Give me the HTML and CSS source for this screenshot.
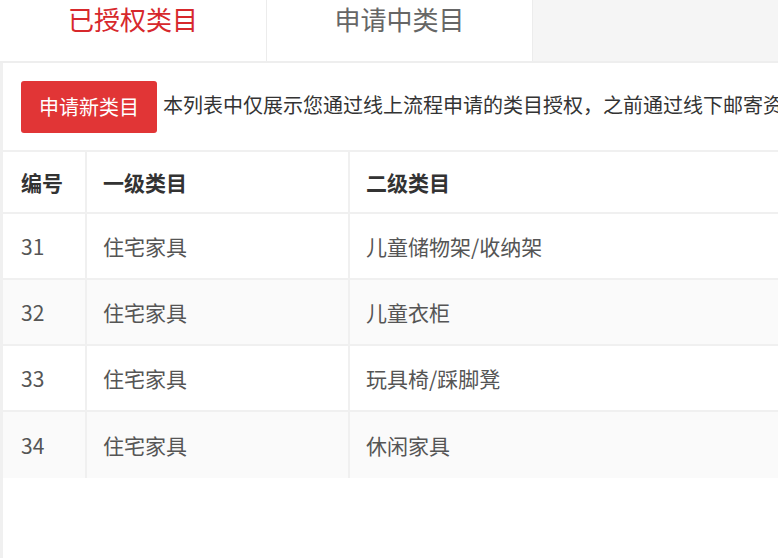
FILE: index.html
```html
<!DOCTYPE html>
<html lang="zh-CN">
<head>
<meta charset="utf-8">
<title>类目授权</title>
<link rel="stylesheet" href="styles.css">
</head>
<body>
<div class="page">
  <div class="tabs">
    <div class="tab tab-active">已授权类目</div>
    <div class="tab">申请中类目</div>
  </div>
  <div class="panel">
    <div class="toolbar">
      <button class="btn-apply">申请新类目</button>
      <span class="notice">本列表中仅展示您通过线上流程申请的类目授权，之前通过线下邮寄资料</span>
    </div>
    <div class="table">
      <div class="row row-head">
        <div class="cell c1">编号</div>
        <div class="cell c2">一级类目</div>
        <div class="cell c3">二级类目</div>
      </div>
      <div class="row">
        <div class="cell c1">31</div>
        <div class="cell c2">住宅家具</div>
        <div class="cell c3">儿童储物架/收纳架</div>
      </div>
      <div class="row row-alt">
        <div class="cell c1">32</div>
        <div class="cell c2">住宅家具</div>
        <div class="cell c3">儿童衣柜</div>
      </div>
      <div class="row">
        <div class="cell c1">33</div>
        <div class="cell c2">住宅家具</div>
        <div class="cell c3">玩具椅/踩脚凳</div>
      </div>
      <div class="row row-alt">
        <div class="cell c1">34</div>
        <div class="cell c2">住宅家具</div>
        <div class="cell c3">休闲家具</div>
      </div>
    </div>
  </div>
</div>
</body>
</html>
```
FILE: styles.css
```css
html, body {
  margin: 0;
  padding: 0;
  height: 100%;
  overflow: hidden;
  background: #ffffff;
  font-family: "Noto Sans CJK SC", "Noto Sans", sans-serif;
}

.page {
  display: flex;
  flex-direction: column;
  height: 558px;
  width: 778px;
  overflow: hidden;
}

.tabs {
  display: flex;
  height: 61px;
  background: #f5f5f5;
  border-bottom: 2px solid #eeeeee;
  flex-shrink: 0;
}

.tab {
  width: 265px;
  height: 61px;
  background: #ffffff;
  border-right: 1px solid #ececec;
  text-align: center;
  font-size: 26px;
  line-height: 38px;
  color: #666666;
}

.tab-active {
  width: 266px;
  color: #d7282c;
}

.panel {
  flex: 1;
  background: #ffffff;
  border-left: 3px solid #f0f0f0;
  overflow: hidden;
}

.toolbar {
  display: flex;
  align-items: center;
  padding: 18px 0 17px 18px;
  border-bottom: 2px solid #f0f0f0;
  white-space: nowrap;
  overflow: hidden;
}

.btn-apply {
  flex-shrink: 0;
  width: 136px;
  height: 52px;
  padding: 0;
  border: none;
  border-radius: 3px;
  background: #e13536;
  color: #ffffff;
  font-family: inherit;
  font-size: 20px;
  line-height: 52px;
}

.notice {
  margin-left: 6px;
  margin-bottom: 6px;
  font-size: 20px;
  color: #333333;
}

.table {
  width: 1100px;
}

.row {
  display: grid;
  grid-template-columns: 84px 263px 1fr;
  height: 66px;
  box-sizing: border-box;
  border-bottom: 2px solid #f0f0f0;
  background: #ffffff;
}

.row:last-child {
  border-bottom: none;
}

.row-head {
  height: 62px;
}

.row-alt {
  background: #fafafa;
}

.cell {
  display: flex;
  align-items: center;
  border-right: 2px solid #f0f0f0;
  padding-left: 16px;
  font-size: 21px;
  color: #555555;
}

.c1 {
  padding-left: 18px;
}

.row-head .cell {
  font-weight: 700;
  color: #333333;
}
```
